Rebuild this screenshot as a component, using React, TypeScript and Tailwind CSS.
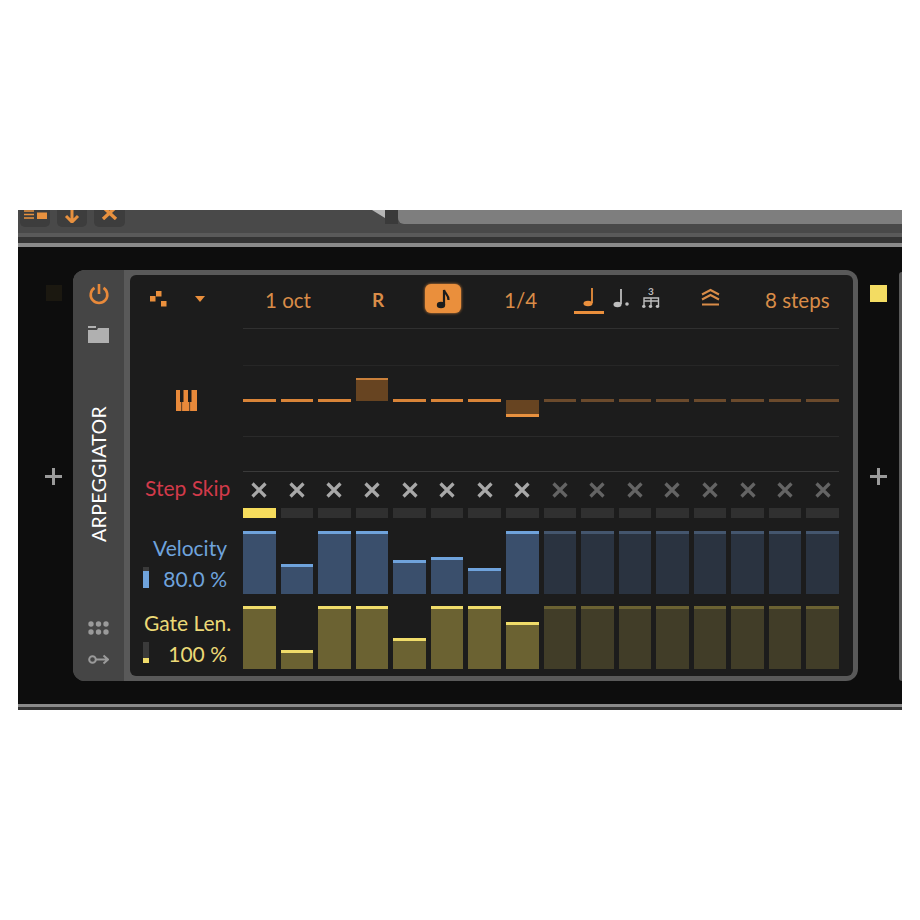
const velocity = [63, 30, 63, 63, 34, 37, 26, 63, 63, 63, 63, 63, 63, 63, 63, 63];
const gate = [63, 19, 63, 63, 31, 63, 63, 47, 63, 63, 63, 63, 63, 63, 63, 63];
const ACTIVE = 8;

function SkipX({ active }: { active: boolean }) {
  return (
    <svg width="18" height="18" viewBox="0 0 18 18" className={active ? "text-[#a8a8a8]" : "text-[#646464]"}>
      <path d="M2.5 2.5 L15.5 15.5 M15.5 2.5 L2.5 15.5" stroke="currentColor" strokeWidth="3.2" fill="none" />
    </svg>
  );
}

function PlusIcon() {
  return (
    <svg width="17" height="17" viewBox="0 0 17 17" className="text-[#9a9a9a]">
      <path d="M8.5 0 V17 M0 8.5 H17" stroke="currentColor" strokeWidth="3" fill="none" />
    </svg>
  );
}

function TopBar() {
  return (
    <div className="h-[37px] shrink-0 flex flex-col">
      <div className="h-[23px] bg-[#494949] flex relative">
        <div className="flex gap-[7px] pl-[2px]">
          <div className="w-[30px] h-[17px] bg-[#3d3d3d] rounded-b-[5px] flex items-start justify-center">
            <svg width="23" height="9" viewBox="0 0 23 9" className="text-[#e8913f]">
              <path d="M0 1 H10 M0 4.5 H10 M0 8 H10" stroke="currentColor" strokeWidth="1.6" />
              <rect x="13" y="2.5" width="10" height="6.5" fill="currentColor" />
            </svg>
          </div>
          <div className="w-[30px] h-[17px] bg-[#3d3d3d] rounded-b-[5px] flex items-start justify-center">
            <svg width="16" height="13" viewBox="0 0 16 13" className="text-[#e8913f]">
              <path d="M8 0 V11 M2 6 L8 12 L14 6" stroke="currentColor" strokeWidth="3" fill="none" />
            </svg>
          </div>
          <div className="w-[31px] h-[17px] bg-[#3d3d3d] rounded-b-[5px] flex items-start justify-center">
            <svg width="18" height="10" viewBox="0 0 18 10" className="text-[#e8913f]">
              <path d="M2 -3 L15 9 M15 -3 L2 9" stroke="currentColor" strokeWidth="3.4" fill="none" />
            </svg>
          </div>
        </div>
        <div className="ml-[247px] w-0 h-0 border-t-[8px] border-t-[#b5b5b5] border-l-[13px] border-l-transparent" />
        <div className="w-[13px] h-[14px] bg-[#3a3a3a]" />
        <div className="flex-1 h-[14px] bg-[#7e7e7e] rounded-bl-[6px]" />
      </div>
      <div className="h-[4px] bg-[#5a5a5a]" />
      <div className="h-[6px] bg-[#343434]" />
      <div className="h-[4px] bg-[#8a8a8a]" />
    </div>
  );
}

function Sidebar() {
  return (
    <div className="w-[51px] shrink-0 bg-[#454545] rounded-l-[12px] flex flex-col items-center py-[13px]">
      <div className="flex-1 flex flex-col items-center gap-[21px]">
        <svg width="22" height="22" viewBox="0 0 22 22" className="text-[#e8893a]">
          <path d="M6.5 4.8 A8.3 8.3 0 1 0 15.5 4.8 M11 1 V11" stroke="currentColor" strokeWidth="2.6" fill="none" />
        </svg>
        <svg width="21" height="17" viewBox="0 0 21 17" className="text-[#b0b0b0]">
          <path d="M0 0 H8 V2 H0 Z M0 4 H9 L10 2 H21 V17 H0 Z" fill="currentColor" />
        </svg>
      </div>
      <div className="[writing-mode:vertical-rl] rotate-180 text-white text-[19.5px] leading-none tracking-[0.3px]">
        ARPEGGIATOR
      </div>
      <div className="flex-1 flex flex-col items-center justify-end gap-[19px] pb-[3px]">
        <svg width="21" height="14" viewBox="0 0 21 14" className="text-[#9a9a9a]">
          {[3, 10.5, 18].map((x) => (
            <g key={x}>
              <circle cx={x} cy="3" r="2.7" fill="currentColor" />
              <circle cx={x} cy="11" r="2.7" fill="currentColor" />
            </g>
          ))}
        </svg>
        <svg width="21" height="11" viewBox="0 0 21 11" className="text-[#9a9a9a]">
          <circle cx="4.5" cy="5.5" r="3.3" stroke="currentColor" strokeWidth="2" fill="none" />
          <path d="M8 5.5 H20 M15.5 1.5 L20 5.5 L15.5 9.5" stroke="currentColor" strokeWidth="2" fill="none" />
        </svg>
      </div>
    </div>
  );
}

function Header() {
  return (
    <div className="h-[53px] flex items-center pb-[6px] text-[#d98c48] text-[20.5px]">
      <svg width="17" height="17" viewBox="0 0 17 17" className="ml-[20px] text-[#ea8f3c]">
        <path d="M6 1 H11.5 V6.5 H6 Z M0 6 H5.5 V11.5 H0 Z M11 11 H16.5 V16.5 H11 Z" fill="currentColor" />
      </svg>
      <div className="ml-[28px] w-0 h-0 border-x-[5px] border-x-transparent border-t-[6px] border-t-[#ea8f3c]" />
      <div className="ml-[60px] w-[46px] pt-[4px] whitespace-nowrap">1 oct</div>
      <div className="ml-[61px] w-[14px] pt-[4px] font-bold text-[19px]">R</div>
      <div className="ml-[39px] w-[36px] h-[29px] rounded-[6px] bg-[#ea8f3c] flex items-center justify-center shadow-[0_0_3px_#ea8f3c]">
        <svg width="14" height="20" viewBox="0 0 14 20" className="text-[#1c1c1c]">
          <ellipse cx="5" cy="16" rx="4.2" ry="3.2" fill="currentColor" />
          <path d="M8 16 V1 C9 5 13 6 12.5 11" stroke="currentColor" strokeWidth="2.2" fill="none" />
        </svg>
      </div>
      <div className="ml-[43px] w-[33px] pt-[4px]">1/4</div>
      <div className="ml-[37px] w-[30px] h-[30px] relative flex justify-center pt-[3px]">
        <svg width="12" height="20" viewBox="0 0 12 20" className="text-[#ea8f3c]">
          <ellipse cx="5" cy="16.5" rx="4.5" ry="2.8" fill="currentColor" />
          <path d="M9 16 V1" stroke="currentColor" strokeWidth="1.8" />
        </svg>
        <div className="absolute bottom-0 inset-x-0 h-[3px] bg-[#ea8f3c]" />
      </div>
      <svg width="16" height="20" viewBox="0 0 16 20" className="ml-[9px] mb-[2px] text-[#bdbdbd]">
        <ellipse cx="4.5" cy="16.5" rx="4" ry="2.8" fill="currentColor" />
        <path d="M8 16 V1" stroke="currentColor" strokeWidth="1.8" />
        <circle cx="14" cy="16" r="1.8" fill="currentColor" />
      </svg>
      <div className="ml-[13px] w-[18px] h-[24px] mb-[2px] flex flex-col items-center text-[#bdbdbd]">
        <span className="text-[10px] leading-[10px] font-bold">3</span>
        <svg width="18" height="13" viewBox="0 0 18 13">
          <path d="M2 10 V2 H16.5 V10 M9 10 V2 M2 5 H16.5" stroke="currentColor" strokeWidth="1.4" fill="none" />
          <ellipse cx="1.8" cy="10.5" rx="1.8" ry="1.4" fill="currentColor" />
          <ellipse cx="8.5" cy="10.5" rx="1.8" ry="1.4" fill="currentColor" />
          <ellipse cx="15.5" cy="10.5" rx="1.8" ry="1.4" fill="currentColor" />
        </svg>
      </div>
      <svg width="19" height="19" viewBox="0 0 19 19" className="ml-[41px] mb-[2px] text-[#d98c48]">
        <path d="M1 6.5 L9.5 2 L18 6.5 M1 11.5 L9.5 7 L18 11.5 M1 16.5 H18" stroke="currentColor" strokeWidth="2" fill="none" />
      </svg>
      <div className="ml-[45px] pt-[4px] whitespace-nowrap">8 steps</div>
    </div>
  );
}

function PitchRow() {
  return (
    <div className="flex h-[144px]">
      <div className="w-[113px] shrink-0 flex justify-end pr-[46px] pt-[62px]">
        <svg width="21" height="21" viewBox="0 0 21 21" className="text-[#e8893a]">
          <path
            fillRule="evenodd"
            d="M0 0 H21 V21 H0 Z M4 0 V12 H7.5 V0 Z M12 0 V12 H15.5 V0 Z M5.4 12 V21 H6.1 V12 Z M13.4 12 V21 H14.1 V12 Z"
            fill="currentColor"
          />
        </svg>
      </div>
      <div className="w-[596px] relative border-t border-[#303030]">
        <div className="absolute inset-x-0 top-[36px] h-px bg-[#262626]" />
        <div className="absolute inset-x-0 top-[107px] h-px bg-[#2a2a2a]" />
        <div className="absolute inset-x-0 bottom-0 h-px bg-[#3a3a3a]" />
        <div className="absolute inset-0 grid grid-cols-16 gap-x-[5px]">
          {velocity.map((_, i) => {
            const dim = i >= ACTIVE;
            return (
              <div key={i} className="relative">
                {i === 3 && (
                  <div className="absolute inset-x-0 top-[49px] h-[23px] bg-[#674421] border-t-2 border-[#c9803b]" />
                )}
                {i === 7 && (
                  <div className="absolute inset-x-0 top-[71px] h-[17px] bg-[#674421] border-b-[3px] border-[#e8913f]" />
                )}
                {i !== 3 && i !== 7 && (
                  <div className={`absolute inset-x-0 top-[70px] h-[3px] ${dim ? "bg-[#6b4a2c]" : "bg-[#d98438]"}`} />
                )}
              </div>
            );
          })}
        </div>
      </div>
    </div>
  );
}

function SkipRow() {
  return (
    <div className="flex h-[46px]">
      <div className="w-[113px] shrink-0 pl-[15px] pt-[3px] text-[#d23a4a] text-[21px] leading-[26px] whitespace-nowrap">
        Step Skip
      </div>
      <div className="w-[596px] grid grid-cols-16 gap-x-[5px]">
        {velocity.map((_, i) => (
          <div key={i} className="flex flex-col items-center pt-[9px]">
            <SkipX active={i < ACTIVE} />
            <div className={`mt-[9px] h-[10px] w-full ${i === 0 ? "bg-[#f6dc5c]" : "bg-[#303030]"}`} />
          </div>
        ))}
      </div>
    </div>
  );
}

function BarRow({
  values,
  title,
  titleLeft,
  amount,
  textColor,
  meterColor,
  meterFill,
  bright,
  brightTop,
  dim,
  dimTop,
}: {
  values: number[];
  title: string;
  titleLeft: string;
  amount: string;
  textColor: string;
  meterColor: string;
  meterFill: string;
  bright: string;
  brightTop: string;
  dim: string;
  dimTop: string;
}) {
  return (
    <div className="flex h-[63px]">
      <div className={`w-[113px] shrink-0 flex flex-col text-[21px] leading-[26px] ${textColor} whitespace-nowrap relative`}>
        <div className={`pt-[4px] ${titleLeft}`}>{title}</div>
        <div className="mt-[5px] pr-[16px] text-right">{amount}</div>
        <div className="absolute left-[13px] top-[36px] w-[6px] h-[21px] bg-[#3a3a3a] flex items-end">
          <div className={`w-full ${meterColor} ${meterFill}`} />
        </div>
      </div>
      <div className="w-[596px] grid grid-cols-16 gap-x-[5px] items-end">
        {values.map((v, i) => (
          <div
            key={i}
            className={`border-t-[3px] ${i < ACTIVE ? `${bright} ${brightTop}` : `${dim} ${dimTop}`}`}
            style={{ height: v }}
          />
        ))}
      </div>
    </div>
  );
}

export default function App() {
  return (
    <div
      className="w-[920px] h-[920px] bg-white pt-[210px] pl-[18px] overflow-hidden"
      style={{ fontFamily: "Lato, sans-serif" }}
    >
      <div className="w-[884px] h-[500px] bg-[#0d0d0d] flex flex-col">
        <TopBar />
        <div className="flex-1 flex">
          <div className="w-[55px] shrink-0 relative flex flex-col items-center pt-[38px]">
            <div className="w-[16px] h-[16px] ml-[16px] bg-[#1b1810]" />
            <div className="mt-[167px] ml-[16px]">
              <PlusIcon />
            </div>
          </div>
          <div className="mt-[23px] w-[785px] h-[411px] flex rounded-[12px] bg-[#595959]">
            <Sidebar />
            <div className="flex-1 ml-[6px] mr-[5px] my-[5px] bg-[#1c1c1c] rounded-[6px]">
              <Header />
              <PitchRow />
              <SkipRow />
              <div className="mt-[13px]">
                <BarRow
                  values={velocity}
                  title="Velocity"
                  titleLeft="pl-[23px]"
                  amount="80.0 %"
                  textColor="text-[#6fa3dc]"
                  meterColor="bg-[#6fa3dc]"
                  meterFill="h-[17px]"
                  bright="bg-[#3a4f6c]"
                  brightTop="border-[#6fa3dc]"
                  dim="bg-[#2a3340]"
                  dimTop="border-[#44566e]"
                />
              </div>
              <div className="mt-[12px]">
                <BarRow
                  values={gate}
                  title="Gate Len."
                  titleLeft="pl-[14px]"
                  amount="100 %"
                  textColor="text-[#ecd977]"
                  meterColor="bg-[#f0dc6a]"
                  meterFill="h-[5px]"
                  bright="bg-[#6b6232]"
                  brightTop="border-[#f0dc6a]"
                  dim="bg-[#413d28]"
                  dimTop="border-[#6b6232]"
                />
              </div>
            </div>
          </div>
          <div className="flex-1 relative flex">
            <div className="flex-1 flex flex-col items-center pt-[38px]">
              <div className="w-[17px] h-[17px] bg-[#f3dc62]" />
              <div className="mt-[166px]">
                <PlusIcon />
              </div>
            </div>
            <div className="w-[3px] mt-[25px] h-[409px] bg-[#595959] rounded-l-[4px]" />
          </div>
        </div>
        <div className="h-[6px] shrink-0 flex flex-col">
          <div className="h-[3px] bg-[#8a8a8a]" />
          <div className="h-[3px] bg-[#343434]" />
        </div>
      </div>
    </div>
  );
}
